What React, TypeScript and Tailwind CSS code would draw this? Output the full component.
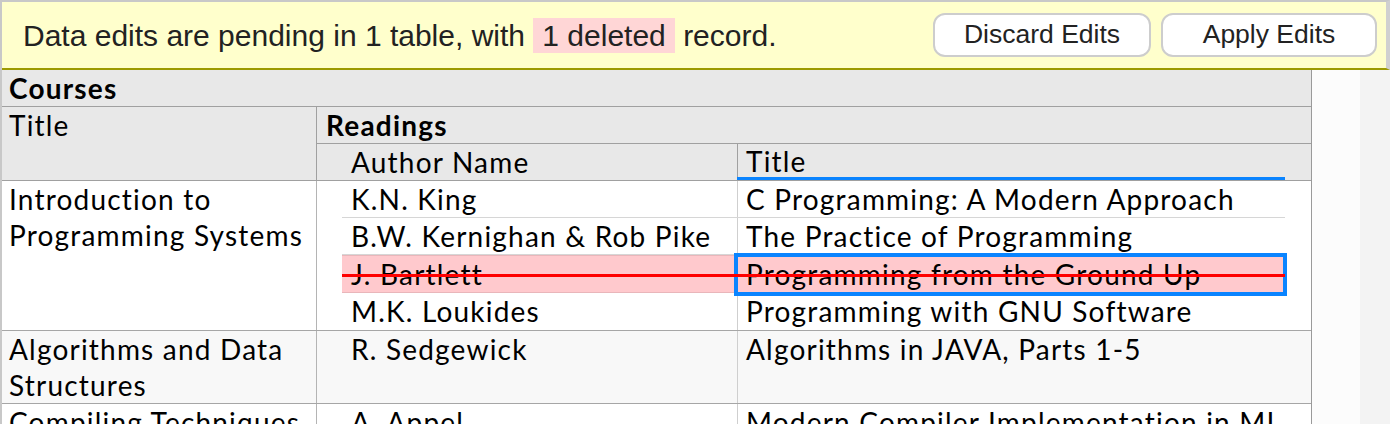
type Reading = {
  author: string
  title: string
  deleted?: boolean
}

type Course = {
  title: string[]
  readings: Reading[]
  striped?: boolean
}

const courses: Course[] = [
  {
    title: ['Introduction to', 'Programming Systems'],
    readings: [
      { author: 'K.N. King', title: 'C Programming: A Modern Approach' },
      { author: 'B.W. Kernighan & Rob Pike', title: 'The Practice of Programming' },
      { author: 'J. Bartlett', title: 'Programming from the Ground Up', deleted: true },
      { author: 'M.K. Loukides', title: 'Programming with GNU Software' },
    ],
  },
  {
    title: ['Algorithms and Data', 'Structures'],
    readings: [{ author: 'R. Sedgewick', title: 'Algorithms in JAVA, Parts 1-5' }],
    striped: true,
  },
  {
    title: ['Compiling Techniques'],
    readings: [{ author: 'A. Appel', title: 'Modern Compiler Implementation in ML' }],
  },
]

function PendingBanner() {
  return (
    <div className="flex h-[70px] items-center justify-between border-t-2 border-r-4 border-b-2 border-t-[#c8c8c8] border-r-[#d0d0d0] border-b-[#9c9a00] bg-[#ffffcc] pr-[9px] pl-[21px] font-['Liberation_Sans',Arial,sans-serif] text-[#222]">
      <p className="text-[30px] whitespace-nowrap">
        Data edits are pending in 1 table, with{' '}
        <span className="bg-[#ffd6d6] px-[9px] py-[1px]">1 deleted</span> record.
      </p>
      <div className="flex gap-[10px] text-[26.5px]">
        <button
          className="h-[44px] w-[218px] rounded-[12px] border-2 border-[#cdcdcd] bg-white text-[#222]"
          type="button"
        >
          Discard Edits
        </button>
        <button
          className="h-[44px] w-[216px] rounded-[12px] border-2 border-[#cdcdcd] bg-white text-[#222]"
          type="button"
        >
          Apply Edits
        </button>
      </div>
    </div>
  )
}

function ReadingRow({ reading, last }: { reading: Reading; last: boolean }) {
  if (reading.deleted) {
    return (
      <div className="relative flex min-h-[37px] flex-1 border-y border-[#e9b6ba] bg-[#ffc9cd]">
        <div className="w-[396px] border-r border-[#e0c0c0] pl-[9px]">{reading.author}</div>
        <div className="relative w-[547px] pl-[8px]">
          {reading.title}
          <div className="absolute -top-[3px] -right-[2px] -bottom-[4px] -left-[4px] border-4 border-[#0a84ff]" />
        </div>
        <div className="absolute top-[18px] right-0 left-0 h-[3px] bg-[#ff0000]" />
      </div>
    )
  }

  return (
    <div
      className={
        last
          ? 'flex min-h-[37px] flex-1'
          : 'flex min-h-[37px] flex-1 border-b border-[#d6d6d6]'
      }
    >
      <div className="w-[396px] border-r border-[#cfcfcf] pl-[9px]">{reading.author}</div>
      <div className="w-[547px] pl-[8px]">{reading.title}</div>
    </div>
  )
}

function CourseRow({ course }: { course: Course }) {
  return (
    <div
      className={
        course.striped
          ? 'flex border-b border-[#a6a6a6] bg-[#f8f8f8]'
          : 'flex border-b border-[#a6a6a6] bg-white'
      }
    >
      <div className="w-[315px] shrink-0 border-r border-[#b4b4b4] px-[7px]">
        {course.title.map((line) => (
          <div key={line}>{line}</div>
        ))}
      </div>
      <div className="flex flex-1 pl-[25px]">
        <div className="flex w-[943px] flex-col">
          {course.readings.map((reading, i) => (
            <ReadingRow
              key={reading.author}
              last={i === course.readings.length - 1}
              reading={reading}
            />
          ))}
        </div>
      </div>
    </div>
  )
}

function CoursesTable() {
  return (
    <div className="w-[1310px] shrink-0 border-r border-[#9a9a9a] font-['Lato','Noto_Sans',sans-serif] text-[28px] leading-[36px] tracking-[1.2px] text-black">
      <div className="h-[37px] border-b border-[#a0a0a0] bg-[#e8e8e8] px-[7px] font-bold">
        Courses
      </div>
      <div className="flex border-b border-[#a0a0a0] bg-[#e8e8e8]">
        <div className="w-[315px] shrink-0 border-r border-[#a0a0a0] px-[7px]">Title</div>
        <div className="flex-1">
          <div className="h-[37px] border-b border-[#a0a0a0] pl-[9px] font-bold">Readings</div>
          <div className="flex h-[36px]">
            <div className="w-[421px] border-r border-[#a0a0a0] pl-[34px]">Author Name</div>
            <div className="flex-1">
              <div className="h-[36px] w-[548px] -translate-x-[1px] border-b-[3px] border-[#0a84ff] pl-[9px] leading-[34px]">
                Title
              </div>
            </div>
          </div>
        </div>
      </div>
      {courses.map((course) => (
        <CourseRow course={course} key={course.title[0]} />
      ))}
    </div>
  )
}

export default function App() {
  return (
    <div className="h-[424px] w-[1390px] overflow-hidden border-l-2 border-[#c8c8c8] bg-white">
      <PendingBanner />
      <div className="flex h-[354px]">
        <CoursesTable />
        <div className="w-[48px] bg-[#fcfcfc]" />
        <div className="w-[30px] bg-[#f3f3f3]" />
      </div>
    </div>
  )
}
